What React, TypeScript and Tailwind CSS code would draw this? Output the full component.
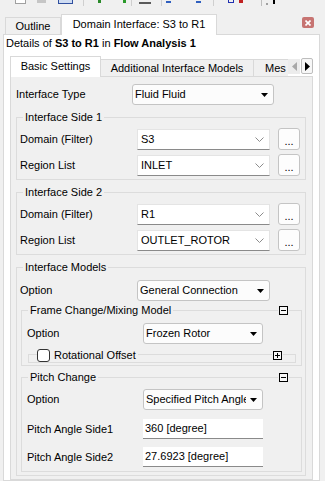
import React from "react";

function Caret() {
  return (
    <svg width="7" height="4" viewBox="0 0 7 4" className="shrink-0">
      <path d="M0 0h7L3.5 4z" fill="#000" />
    </svg>
  );
}

function Chevron() {
  return (
    <svg width="9" height="5" viewBox="0 0 9 5" className="shrink-0">
      <path d="M0.5 0.5L4.5 4.5L8.5 0.5" stroke="#8c8c8c" fill="none" strokeWidth="1" />
    </svg>
  );
}

function DropSelect({ value, className }: { value: string; className: string }) {
  return (
    <div
      className={`h-[21px] rounded-[3px] border border-[#c4c4c4] bg-[#fcfcfc] flex items-center pl-[2px] pr-[5px] ${className}`}
    >
      <span className="flex-1 overflow-hidden whitespace-nowrap mr-[4px]">{value}</span>
      <Caret />
    </div>
  );
}

function ComboBox({ value }: { value: string }) {
  return (
    <div className="h-[21px] w-[133px] bg-white border border-[#e4e4e4] border-b-[#8a8a8a] flex items-center pl-[3px] pr-[5px]">
      <span className="flex-1">{value}</span>
      <Chevron />
    </div>
  );
}

function DotsButton() {
  return (
    <div className="ml-[8px] w-[22px] h-[22px] rounded-[3px] border border-[#c4c4c4] bg-[#fdfdfd] flex items-end justify-center pb-[2px] leading-none">
      ...
    </div>
  );
}

function TextInput({ value }: { value: string }) {
  return (
    <div className="h-[20px] w-[120px] bg-white border-b border-[#8a8a8a] flex items-center pl-[2px]">
      {value}
    </div>
  );
}

function BoxIcon({ plus }: { plus?: boolean }) {
  return (
    <svg width="9" height="9" viewBox="0 0 9 9" className="shrink-0">
      <rect x="0.5" y="0.5" width="8" height="8" fill="#f7f7f7" stroke="#000" />
      <path d="M2 4.5h5" stroke="#000" />
      {plus && <path d="M4.5 2v5" stroke="#000" />}
    </svg>
  );
}

function GroupHeader({ title, toggle }: { title: string; toggle?: boolean }) {
  return (
    <div className="-mt-[7px] h-[13px] flex items-center">
      <span className="ml-[6px] px-[2px] bg-[#f0f0f0] leading-[13px]">{title}</span>
      {toggle && (
        <span className="ml-auto mr-[12px] px-[1px] bg-[#f0f0f0] flex">
          <BoxIcon />
        </span>
      )}
    </div>
  );
}

function FieldRow({ label, value }: { label: string; value: string }) {
  return (
    <div className="mt-[4px] h-[22px] flex items-center pl-[3px]">
      <span className="w-[117px]">{label}</span>
      <ComboBox value={value} />
      <DotsButton />
    </div>
  );
}

function Toolbar() {
  return (
    <div className="h-[6px] flex items-start">
      <div className="ml-[15px] w-[11px] h-[4px] border border-t-0 border-[#a0a0a0] bg-white" />
      <div className="ml-[11px] w-[9px] h-[3px] bg-[#c6c6c6]" />
      <div className="ml-[12px] w-[15px] h-[4px] border border-t-0 border-[#2f4f9f] bg-[#cfdcf2]" />
      <div className="ml-[10px] w-px h-[6px] bg-[#cfcfcf]" />
      <div className="ml-[14px] w-[3px] h-[3px] bg-[#2a8a2a]" />
      <div className="ml-[22px] w-[3px] h-[3px] bg-[#2a9a2a]" />
      <div className="ml-[5px] w-px h-[6px] bg-[#cfcfcf]" />
      <div className="ml-[7px] mt-[2px] w-[12px] h-[2px] bg-[#5a5a5a]" />
      <div className="ml-[10px] w-px h-[6px] bg-[#cfcfcf]" />
      <div className="ml-[4px] mt-[1px] w-[5px] h-[2px] bg-[#2f5fbf]" />
      <div className="ml-[25px] mt-[1px] w-[5px] h-[2px] bg-[#2f5fbf]" />
      <div className="ml-[12px] w-px h-[6px] bg-[#cfcfcf]" />
      <div className="ml-[14px] w-[6px] h-[3px] border border-t-0 border-[#2030b0]" />
      <div className="ml-[5px] w-[4px] h-[3px] bg-[#c02020]" />
      <div className="ml-[18px] w-px h-[6px] bg-[#bdbdbd]" />
      <div className="ml-[4px] mt-[3px] w-[2px] h-[2px] bg-[#a0a0a0]" />
      <div className="ml-[5px] w-[2px] h-[4px] bg-[#000]" />
    </div>
  );
}

export default function App() {
  return (
    <div className="w-[325px] h-[481px] bg-[#f0f0f0] overflow-hidden flex flex-col text-[11px] text-black font-['Liberation_Sans',Arial,sans-serif]">
      <Toolbar />

      {/* Outer tabs */}
      <div className="mt-[8px] h-[21px] flex items-end pl-[5px]">
        <div className="w-[56px] h-[18px] border border-b-0 border-[#d9d9d9] bg-[#f0f0f0] flex items-center justify-center">
          Outline
        </div>
        <div className="relative z-10 w-[156px] h-[21px] border border-b-0 border-[#d9d9d9] bg-white flex items-center justify-center pb-[1px]">
          Domain Interface: S3 to R1
        </div>
        <div className="ml-auto mr-[11px] self-start mt-[3px] w-[12px] h-[11px] rounded-[2px] bg-[#c77472] flex items-center justify-center">
          <svg width="6" height="6" viewBox="0 0 6 6">
            <path d="M0.5 0.5L5.5 5.5M5.5 0.5L0.5 5.5" stroke="#fff" strokeWidth="1.6" />
          </svg>
        </div>
      </div>

      {/* Tab page */}
      <div className="-mt-px ml-[3px] w-[317px] flex-1 border border-[#d9d9d9] bg-white flex flex-col">
        <div className="h-[16px] pl-[2px] flex items-center whitespace-nowrap">
          <span>Details of&nbsp;</span>
          <span className="font-bold">S3 to R1</span>
          <span>&nbsp;in&nbsp;</span>
          <span className="font-bold">Flow Analysis 1</span>
        </div>

        {/* Inner tabs */}
        <div className="mt-[5px] h-[21px] flex items-end pl-[6px]">
          <div className="relative z-10 w-[91px] h-[21px] border border-b-0 border-[#d9d9d9] bg-white flex items-center justify-center pb-[1px]">
            Basic Settings
          </div>
          <div className="w-[153px] h-[18px] border-t border-r border-[#d9d9d9] bg-[#f0f0f0] flex items-center justify-center">
            Additional Interface Models
          </div>
          <div className="w-[34px] h-[18px] border-t border-[#d9d9d9] bg-[#f0f0f0] flex items-center pl-[11px] whitespace-nowrap">
            Mes
          </div>
          <div className="self-start mt-[3px] w-[12px] h-[15px] bg-[#ececec] flex items-center justify-center">
            <svg width="5" height="9" viewBox="0 0 5 9">
              <path d="M5 0v9L0 4.5z" fill="#a8a8a8" />
            </svg>
          </div>
          <div className="self-start mt-[2px] ml-[1px] w-[12px] h-[16px] rounded-[2px] border border-[#bdbdbd] bg-[#f7f7f7] flex items-center justify-center">
            <svg width="5" height="9" viewBox="0 0 5 9">
              <path d="M0 0v9L5 4.5z" fill="#000" />
            </svg>
          </div>
        </div>

        {/* Panel */}
        <div className="-mt-px ml-[6px] w-[303px] flex-1 border border-[#d9d9d9] bg-[#f0f0f0] overflow-hidden">
          <div className="mt-[7px] h-[21px] flex items-center pl-[5px]">
            <span className="w-[116px]">Interface Type</span>
            <DropSelect value="Fluid Fluid" className="w-[142px]" />
          </div>

          <div className="mt-[12px] ml-[5px] w-[290px] border border-[#dcdcdc] pb-[3px]">
            <GroupHeader title="Interface Side 1" />
            <FieldRow label="Domain (Filter)" value="S3" />
            <FieldRow label="Region List" value="INLET" />
          </div>

          <div className="mt-[12px] ml-[5px] w-[290px] border border-[#dcdcdc] pb-[3px]">
            <GroupHeader title="Interface Side 2" />
            <FieldRow label="Domain (Filter)" value="R1" />
            <FieldRow label="Region List" value="OUTLET_ROTOR" />
          </div>

          <div className="mt-[12px] ml-[5px] w-[290px] border border-[#dcdcdc] pb-[3px]">
            <GroupHeader title="Interface Models" />
            <div className="mt-[6px] h-[21px] flex items-center pl-[3px]">
              <span className="w-[117px]">Option</span>
              <DropSelect value="General Connection" className="w-[133px]" />
            </div>

            <div className="mt-[9px] ml-[4px] w-[281px] border border-[#dcdcdc] pb-[2px]">
              <GroupHeader title="Frame Change/Mixing Model" toggle />
              <div className="mt-[6px] h-[21px] flex items-center pl-[5px]">
                <span className="w-[116px]">Option</span>
                <DropSelect value="Frozen Rotor" className="w-[120px]" />
              </div>
              <div className="mt-[10px] ml-[6px] w-[268px] border border-[#dcdcdc]">
                <div className="-mt-[7px] h-[14px] flex items-center">
                  <span className="ml-[8px] pr-[2px] bg-[#f0f0f0] flex items-center">
                    <span className="w-[13px] h-[13px] rounded-[3px] border border-[#333] bg-white" />
                    <span className="ml-[4px] leading-[13px]">Rotational Offset</span>
                  </span>
                  <span className="ml-auto mr-[12px] px-[1px] bg-[#f0f0f0] flex">
                    <BoxIcon plus />
                  </span>
                </div>
              </div>
            </div>

            <div className="mt-[11px] ml-[4px] w-[281px] border border-[#dcdcdc] pb-[4px]">
              <GroupHeader title="Pitch Change" toggle />
              <div className="mt-[5px] h-[21px] flex items-center pl-[5px]">
                <span className="w-[116px]">Option</span>
                <DropSelect value="Specified Pitch Angle" className="w-[120px]" />
              </div>
              <div className="mt-[9px] h-[20px] flex items-center pl-[5px]">
                <span className="w-[116px]">Pitch Angle Side1</span>
                <TextInput value="360 [degree]" />
              </div>
              <div className="mt-[8px] h-[20px] flex items-center pl-[5px]">
                <span className="w-[116px]">Pitch Angle Side2</span>
                <TextInput value="27.6923 [degree]" />
              </div>
            </div>
          </div>
        </div>
      </div>
    </div>
  );
}
